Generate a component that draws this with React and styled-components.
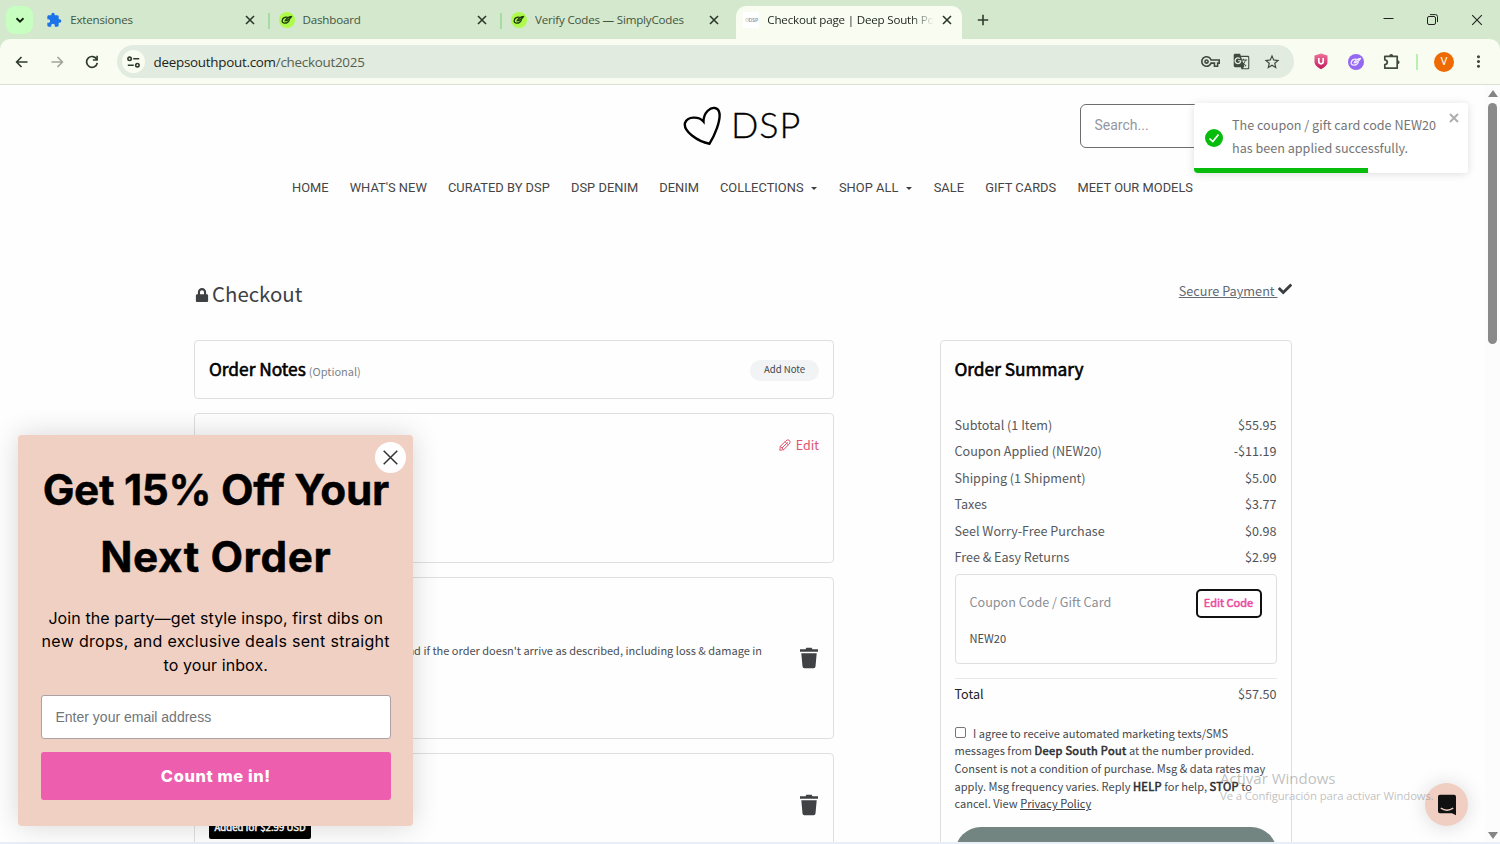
import React from 'react';
import styled, { createGlobalStyle, css } from 'styled-components';
import {
  MdExtension,
  MdGTranslate,
  MdMoreVert,
  MdOutlineVpnKey,
  MdStarOutline,
} from 'react-icons/md';
import { FaLock, FaCheck } from 'react-icons/fa';

const bodyFont = `'Noto Sans CJK SC', 'Open Sans', sans-serif`;
const chromeFont = `'Open Sans', 'Noto Sans', sans-serif`;

const GlobalStyle = createGlobalStyle`
  * {
    box-sizing: border-box;
  }
  body {
    margin: 0;
    overflow: hidden;
    background: #fff;
    font-family: ${bodyFont};
  }
  svg {
    display: block;
    flex: none;
  }
`;

const Window = styled.div`
  position: relative;
  display: flex;
  flex-direction: column;
  width: 1500px;
  height: 844px;
  overflow: hidden;
  background: #d3e8cd;
`;

/* Browser chrome */

const TabStrip = styled.div`
  display: flex;
  height: 39px;
  padding-left: 6px;
  font-family: ${chromeFont};
`;
const TabSearch = styled.div`
  display: flex;
  align-items: center;
  justify-content: center;
  width: 27px;
  height: 28px;
  margin: 6px 6.2px 0 0;
  border-radius: 9px;
  background: #c6ffc0;
`;
const TabSlot = styled.div`
  display: flex;
  align-items: center;
  width: 232.4px;
  padding-top: 6px;
`;
const Tab = styled.div`
  display: flex;
  align-items: center;
  width: 226px;
  height: 33px;
  padding: 0 10.500px 6px 7px;
  ${({ active }) =>
    active &&
    css`
      border-radius: 10px 10px 0 0;
      background: #f8fcf1;
    `}
`;
const TabTitle = styled.div`
  flex: 1;
  margin: 0 8px;
  overflow: hidden;
  white-space: nowrap;
  font-size: 11.6px;
  letter-spacing: -0.2px;
  line-height: 18px;
  color: ${({ active }) => (active ? '#1d241c' : '#43553f')};
  ${({ active }) =>
    active &&
    css`
      mask-image: linear-gradient(90deg, #000 86%, transparent 100%);
    `}
`;
const TabDivider = styled.div`
  width: 2px;
  height: 16px;
  margin: 0 0 4px 2.5px;
  background: #a5dca0;
`;
const Favicon = styled.div`
  display: flex;
  align-items: center;
  justify-content: center;
  width: 16px;
  height: 16px;
  background: ${({ bg }) => bg || 'transparent'};
  border-radius: ${({ round }) => (round ? '50%' : '0')};
  font: 700 5px/16px Lato, sans-serif;
  color: #96969a;
`;
const WindowButtons = styled.div`
  display: flex;
  align-items: center;
  margin-left: auto;
  gap: 33px;
  padding: 0 17px 0 0;
`;
const NewTab = styled.div`
  padding: 14px 0 0 8px;
`;

const Toolbar = styled.div`
  display: flex;
  align-items: center;
  height: 46px;
  padding: 0 12px 0 14px;
  border-bottom: 1px solid #d9e0d6;
  border-radius: 10px 10px 0 0;
  background: #f8fcf1;
`;
const NavButtons = styled.div`
  display: flex;
  gap: 19px;
  width: 103px;
`;
const Omnibox = styled.div`
  display: flex;
  align-items: center;
  width: 1177px;
  height: 33px;
  padding: 0 13.500px 0 5px;
  border-radius: 17px;
  background: #e2ebdf;
  color: #3f4b3f;
`;
const SiteInfo = styled.div`
  display: flex;
  align-items: center;
  justify-content: center;
  width: 23px;
  height: 23px;
  border-radius: 50%;
  background: #f8fcf1;
`;
const Url = styled.div`
  flex: 1;
  margin-left: 8.5px;
  font: 13.4px/20px ${chromeFont};
  letter-spacing: -0.26px;
  color: #1d241c;
  span {
    color: #55614f;
  }
`;
const OmniboxActions = styled.div`
  display: flex;
  align-items: center;
  gap: 13px;
`;
const Extensions = styled.div`
  display: flex;
  align-items: center;
  flex: 1;
  padding-left: 18.5px;
  color: #3f4b3f;
`;
const ExtensionSlot = styled.div`
  width: ${({ w }) => w}px;
`;
const ToolbarDivider = styled.div`
  width: 2px;
  height: 16px;
  margin-right: 16px;
  background: #b9efb2;
`;
const Avatar = styled.div`
  width: 20px;
  height: 20px;
  margin-right: 15px;
  border-radius: 50%;
  background: #ee6a02;
  color: #fff;
  font: 11px/20px Roboto, sans-serif;
  text-align: center;
`;

/* Store page */

const Viewport = styled.div`
  display: flex;
  height: 757px;
  overflow: hidden;
  background: #fefefe;
`;
const Page = styled.main`
  width: 1485px;
`;
const Scrollbar = styled.div`
  display: flex;
  flex-direction: column;
  align-items: center;
  width: 15px;
  padding: 5px 0 2px;
  background: #fcfcfc;
`;
const ScrollThumb = styled.div`
  width: 9px;
  height: 241px;
  margin: 4px 0 auto;
  border-radius: 5px;
  background: #8a8a8a;
`;
const TaskbarEdge = styled.div`
  height: 2px;
  background: #e9effa;
`;

const Header = styled.header`
  display: grid;
  grid-template-columns: 1fr 120px 1fr;
  height: 85px;
  padding-top: 19px;
`;
const Logo = styled.div`
  grid-column: 2;
  display: flex;
  align-items: center;
  height: 44px;
  font: 300 36px/41px Lato, sans-serif;
  letter-spacing: 1px;
  color: #000;
  -webkit-text-stroke: 0.3px #000;
  svg {
    margin: 0 9px 0 0.5px;
  }
`;
const LogoText = styled.span`
  height: 44px;
`;
const SearchBox = styled.div`
  width: 210px;
  height: 44px;
  margin-left: 277px;
  padding: 0 14px;
  border: 1px solid #6d6d6d;
  border-radius: 6px;
  background: #fff;
  font: 14px/41px Roboto, sans-serif;
  color: #9297a3;
`;
const StoreNav = styled.nav`
  display: grid;
  grid-template-columns: 57.7px 98.3px 123px 88.2px 60.8px 119px 94.7px 51.5px 92.3px auto;
  height: 36px;
  padding-left: 292px;
  font: 12.85px/36px Roboto, sans-serif;
  letter-spacing: 0.03px;
  color: #454545;
  white-space: nowrap;
`;
const NavItem = styled.div`
  display: flex;
  align-items: center;
  gap: 7.5px;
`;
const Caret = styled.span`
  margin-top: 1px;
  border: 3.5px solid transparent;
  border-top-color: #3d3d3d;
  border-bottom: 0;
`;

const TitleRow = styled.div`
  display: flex;
  justify-content: space-between;
  height: 64px;
  margin: 70px 193.5px 0 195px;
  color: #3e4144;
`;
const PageTitle = styled.h1`
  display: flex;
  align-items: center;
  gap: 3px;
  height: 35px;
  margin: 0;
  font-size: 20.4px;
  font-weight: 400;
  line-height: 35px;
  svg {
    margin-top: 3px;
  }
`;
const SecureLink = styled.div`
  display: flex;
  height: 32px;
  font-size: 12.7px;
  line-height: 29px;
  color: #626b73;
  white-space: pre;
  span {
    text-decoration: underline;
  }
  svg {
    margin-top: 6px;
    color: #3a3d40;
  }
`;
const Columns = styled.div`
  display: grid;
  grid-template-columns: 640px 351.5px;
  justify-content: space-between;
  margin: 0 193.5px 0 194px;
`;
const CardStack = styled.div`
  display: flex;
  flex-direction: column;
  gap: 14px;
`;
const Card = styled.section`
  display: flex;
  justify-content: ${({ spread }) => (spread ? 'space-between' : 'flex-end')};
  height: ${({ h }) => h}px;
  padding: 0 14px;
  border: 1px solid #dedfe1;
  border-radius: 4px;
`;
const CardTitle = styled.h2`
  margin: 0;
  font-size: 17.3px;
  font-weight: 400;
  line-height: 56px;
  color: #000;
  -webkit-text-stroke: 0.6px #000;
  small {
    margin-left: 3px;
    font-size: 11px;
    color: #7b838a;
    -webkit-text-stroke: 0;
  }
`;
const AddNote = styled.div`
  width: 69px;
  height: 21px;
  margin-top: 19px;
  border-radius: 11px;
  background: #f2f3f5;
  font-size: 9.6px;
  line-height: 18px;
  text-align: center;
  color: #45494d;
`;
const EditLink = styled.div`
  display: flex;
  gap: 5px;
  margin-top: 21px;
  font-size: 12.5px;
  line-height: 20px;
  color: #e2526f;
  svg {
    margin-top: 4px;
  }
`;
const ItemText = styled.div`
  margin: 63px 37px 0 0;
  font-size: 11px;
  line-height: 18px;
  color: #4a4e52;
  white-space: nowrap;
`;
const TrashSlot = styled.div`
  margin-top: ${({ top }) => top}px;
`;
const PriceBadge = styled.div`
  width: 102px;
  height: 22px;
  margin-top: 63px;
  border-radius: 2px;
  background: #000;
  color: #fff;
  font-size: 9.6px;
  line-height: 20px;
  text-align: center;
  -webkit-text-stroke: 0.5px #fff;
`;

const Summary = styled.section`
  display: flex;
  flex-direction: column;
  height: 620px;
  padding: 0 14px 0 13.500px;
  border: 1px solid #dedfe1;
  border-radius: 4px;
`;
const SummaryRow = styled.div`
  display: flex;
  justify-content: space-between;
  font-size: 12.6px;
  line-height: 26.4px;
  color: ${({ total }) => (total ? '#222' : '#56595c')};
  span + span {
    color: #505356;
  }
`;
const SummaryLines = styled.div`
  margin-top: 15px;
`;
const CouponBox = styled.div`
  display: grid;
  grid-template-columns: 1fr auto;
  grid-template-rows: 37px 22px;
  height: 90px;
  margin: 4px 0 13.500px;
  padding: 14px 14px 0;
  border: 1px solid #dedfe1;
  border-radius: 4px;
`;
const CouponLabel = styled.div`
  font-size: 12.6px;
  line-height: 26px;
  color: #8b8f94;
`;
const CouponCode = styled.div`
  font-size: 11.1px;
  line-height: 25px;
  color: #45494d;
`;
const EditCode = styled.div`
  width: 66px;
  height: 29px;
  border: 2px solid #111;
  border-radius: 5px;
  background: #fff;
  font-size: 11px;
  line-height: 22px;
  text-align: center;
  color: #e94b9c;
  -webkit-text-stroke: 0.5px #e94b9c;
`;
const TotalBlock = styled.div`
  padding-top: 2.500px;
  border-top: 1px solid #e6e7e9;
`;
const Agreement = styled.p`
  margin: 17px -4px 14px 0;
  font-size: 11.07px;
  line-height: 17.6px;
  color: #45494d;
  white-space: nowrap;
  b {
    font-weight: 400;
    letter-spacing: 0.34px;
    color: #2c2f33;
    -webkit-text-stroke: 0.55px #2c2f33;
  }
  u {
    color: #3c4043;
  }
`;
const CheckBox = styled.span`
  display: inline-block;
  width: 11px;
  height: 11px;
  margin-right: 7.500px;
  border: 1px solid #767676;
  border-radius: 2px;
  background: #fff;
`;
const PlaceOrder = styled.div`
  height: 52px;
  border-radius: 26px;
  background: #738580;
`;

/* Overlays */

const Toast = styled.div`
  position: absolute;
  top: 103px;
  left: 1194px;
  display: flex;
  width: 274px;
  height: 70px;
  padding: 11px 9px 0 11px;
  border-radius: 4px;
  overflow: hidden;
  background: #fff;
`;
const ToastShadow = styled.div`
  position: absolute;
  top: 103px;
  left: 1194px;
  width: 274px;
  height: 70px;
  border-radius: 4px;
  box-shadow: 0 1px 9px rgba(0, 0, 0, 0.13);
`;
const ToastText = styled.div`
  flex: 1;
  margin-left: 9px;
  font-size: 12.6px;
  line-height: 22.6px;
  color: #757575;
  white-space: nowrap;
`;
const ToastIcon = styled.div`
  margin-top: 15px;
`;
const ToastClose = styled.div`
  margin-top: -1.500px;
`;
const ToastProgress = styled.div`
  position: absolute;
  bottom: 0;
  left: 0;
  width: 174px;
  height: 5px;
  background: #07bc0c;
`;

const Popup = styled.div`
  position: absolute;
  top: 435px;
  left: 18px;
  width: 395px;
  height: 391px;
  padding: 21px 22px 0 22.500px;
  border-radius: 4px;
  background: #f0d0c3;
  box-shadow: 0 0 28px rgba(0, 0, 0, 0.16);
  font-family: Inter, sans-serif;
  text-align: center;
  white-space: nowrap;
  color: #000;
`;
const PopupTitle = styled.h2`
  margin: 0 -10px;
  font-size: 42.3px;
  font-weight: 700;
  line-height: 67.4px;
  -webkit-text-stroke: 0.4px #000;
`;
const PopupText = styled.p`
  margin: 16px -10px 17.500px;
  font-size: 16px;
  line-height: 23.4px;
`;
const TextLine = styled.div`
  letter-spacing: ${({ spacing }) => spacing}px;
`;
const EmailField = styled.div`
  height: 44px;
  padding-left: 14px;
  border: 1px solid #a9a3a3;
  border-radius: 3px;
  background: #fff;
  font: 14px/42px 'Liberation Sans', sans-serif;
  text-align: left;
  color: #70757a;
`;
const JoinButton = styled.div`
  height: 48px;
  margin-top: 13px;
  border-radius: 3px;
  background: #ed5eaf;
  color: #fff;
  font-size: 16.4px;
  font-weight: 800;
  line-height: 48px;
  letter-spacing: 0.6px;
`;
const PopupClose = styled.div`
  position: absolute;
  top: 7px;
  right: 7px;
  display: flex;
  align-items: center;
  justify-content: center;
  width: 31px;
  height: 31px;
  border-radius: 50%;
  background: #fff;
`;

const Watermark = styled.div`
  position: absolute;
  top: 769px;
  left: 1220px;
  font-family: ${chromeFont};
  color: rgba(130, 130, 130, 0.5);
  white-space: nowrap;
`;
const WatermarkTitle = styled.div`
  font-size: 15px;
  line-height: 18px;
`;
const WatermarkText = styled.div`
  font-size: 11.3px;
  line-height: 18px;
  letter-spacing: -0.1px;
`;
const ChatButton = styled.div`
  position: absolute;
  top: 783px;
  left: 1425px;
  display: flex;
  align-items: center;
  justify-content: center;
  width: 43px;
  height: 43px;
  border-radius: 50%;
  background: #f0cfc2;
  box-shadow: 0 1px 20px rgba(0, 0, 0, 0.15);
`;

const Cross = ({ size, stroke, color }) => (
  <svg width={size} height={size} viewBox="0 0 10 10">
    <path
      d="M1 1 9 9M9 1 1 9"
      stroke={color}
      strokeWidth={(stroke * 10) / size}
      fill="none"
    />
  </svg>
);

const LeafMark = ({ color }) => (
  <svg width="12" height="12" viewBox="0 0 12 12">
    <g fill="none" stroke={color} strokeWidth="1.3" strokeLinecap="round">
      <path d="M6 3.2C3.6 2.8 1.5 4.3 1.2 6.6c-.2 1.7 1 2.7 2.7 2.6 2.3-.1 3.6-1.3 4.3-2.8" />
      <path d="M4.2 6.7C5.4 4.1 7.8 3 11 2.5c-1.2.6-1 1.3-2.1 1.8.2.6-.9 1.1-1.7 1.3-.5.8-1.6 1.3-3 1.1z" />
    </g>
  </svg>
);

const TrashIcon = () => (
  <svg width="20" height="22" viewBox="0 0 20 22">
    <path
      fill="#3f4144"
      d="M1 2.3h5.5L7.4.8h5.2l.9 1.500H19v2.400H1zM2.300 6.200h15.400l-1.200 13.300q-.2 1.800-1.800 1.800H5.300q-1.600 0-1.800-1.800z"
    />
  </svg>
);

const PuzzleIcon = () => (
  <svg width="19" height="19" viewBox="0 0 19 19">
    <path
      d="M2.800 4.300H15.200V16.200H2.800V12.600Q5.300 12.200 5.300 10.200T2.800 7.800z"
      fill="none"
      stroke="#3f4b3f"
      strokeWidth="1.700"
      strokeLinejoin="round"
    />
    <path d="M7.200 4.200q0-2.300 2-2.300t2 2.300zM15.300 8.200q2.300 0 2.300 2t-2.300 2z" fill="#3f4b3f" />
  </svg>
);

const Arrow = ({ flip, color }) => (
  <svg width="16" height="16" viewBox="0 0 16 16">
    <path
      d={flip ? 'M2.5 8H13M8.5 3 13.4 8 8.5 13' : 'M13.5 8H3M7.5 3 2.6 8 7.5 13'}
      stroke={color}
      strokeWidth="1.6"
      fill="none"
    />
  </svg>
);

const tabs = [
  { title: 'Extensiones', icon: 'extension' },
  { title: 'Dashboard', icon: 'leaf' },
  { title: 'Verify Codes — SimplyCodes', icon: 'leaf' },
  { title: 'Checkout page | Deep South Pout', icon: 'store', active: true },
];

const navItems = [
  ['HOME'],
  ["WHAT'S NEW"],
  ['CURATED BY DSP'],
  ['DSP DENIM'],
  ['DENIM'],
  ['COLLECTIONS', true],
  ['SHOP ALL', true],
  ['SALE'],
  ['GIFT CARDS'],
  ['MEET OUR MODELS'],
];

const summary = [
  ['Subtotal (1 Item)', '$55.95'],
  ['Coupon Applied (NEW20)', '-$11.19'],
  ['Shipping (1 Shipment)', '$5.00'],
  ['Taxes', '$3.77'],
  ['Seel Worry-Free Purchase', '$0.98'],
  ['Free & Easy Returns', '$2.99'],
];

const TabIcon = ({ icon }) => {
  if (icon === 'extension') {
    return (
      <Favicon>
        <MdExtension size={16} color="#1a73e8" />
      </Favicon>
    );
  }
  if (icon === 'leaf') {
    return (
      <Favicon bg="#aefb4b" round>
        <LeafMark color="#1d3a10" />
      </Favicon>
    );
  }
  return <Favicon bg="#fff">♡DSP</Favicon>;
};

const BrowserChrome = () => (
  <>
    <TabStrip>
      <TabSearch>
        <svg width="10" height="10" viewBox="0 0 10 10">
          <path d="M1.5 3.3 5 6.7 8.5 3.3" stroke="#14210f" strokeWidth="1.9" fill="none" />
        </svg>
      </TabSearch>
      {tabs.map(({ title, icon, active }, index) => (
        <TabSlot key={title}>
          <Tab active={active}>
            <TabIcon icon={icon} />
            <TabTitle active={active}>{title}</TabTitle>
            <Cross size={10} stroke={1.6} color="#2b3829" />
          </Tab>
          {index < 2 && <TabDivider />}
        </TabSlot>
      ))}
      <NewTab>
        <svg width="12" height="12" viewBox="0 0 12 12">
          <path d="M6 .8v10.4M.8 6h10.4" stroke="#2f3d2c" strokeWidth="1.6" />
        </svg>
      </NewTab>
      <WindowButtons>
        <svg width="11" height="11" viewBox="0 0 11 11">
          <path d="M.5 4.5h10" stroke="#222" />
        </svg>
        <svg width="11" height="11" viewBox="0 0 11 11" fill="none" stroke="#222">
          <rect x=".5" y="2.5" width="8" height="8" rx="1.5" />
          <path d="M3 .6h5.5q2 0 2 2v5.5" />
        </svg>
        <Cross size={12} stroke={1.1} color="#222" />
      </WindowButtons>
    </TabStrip>
    <Toolbar>
      <NavButtons>
        <Arrow color="#2f3a2e" />
        <Arrow flip color="#9da59b" />
        <svg width="16" height="16" viewBox="0 0 16 16" fill="none">
          <path d="M12.8 5.5A5.4 5.4 0 1 0 13.3 8.8" stroke="#2f3a2e" strokeWidth="1.7" />
          <path d="M13.9 1.8v5H8.9V5.2h3.4V1.8z" fill="#2f3a2e" />
        </svg>
      </NavButtons>
      <Omnibox>
        <SiteInfo>
          <svg width="13" height="12" viewBox="0 0 13 12" fill="none" stroke="#2f3a2e" strokeWidth="1.6">
            <circle cx="2.6" cy="2.8" r="1.7" />
            <path d="M6.2 2.8h6M.8 9.2h6" />
            <circle cx="10.4" cy="9.2" r="1.7" />
          </svg>
        </SiteInfo>
        <Url>
          deepsouthpout.com<span>/checkout2025</span>
        </Url>
        <OmniboxActions>
          <MdOutlineVpnKey size={19} />
          <MdGTranslate size={17} />
          <MdStarOutline size={18} />
        </OmniboxActions>
      </Omnibox>
      <Extensions>
        <ExtensionSlot w={35.5}>
          <svg width="16" height="17" viewBox="0 0 16 17">
            <defs>
              <linearGradient id="shield" x2="0" y2="1">
                <stop offset="0" stopColor="#f0739b" />
                <stop offset="1" stopColor="#c2185b" />
              </linearGradient>
            </defs>
            <path d="M8 .5 14.5 2.5V9q0 4-6.5 7.3Q1.5 13 1.5 9V2.500z" fill="url(#shield)" />
            <path d="M5.8 5v3.6q0 2.2 2.2 2.2t2.2-2.2V5" fill="none" stroke="#fff" strokeWidth="1.7" />
          </svg>
        </ExtensionSlot>
        <ExtensionSlot w={34}>
          <Favicon bg="#9568f2" round>
            <LeafMark color="#f2ecff" />
          </Favicon>
        </ExtensionSlot>
        <ExtensionSlot w={34}>
          <PuzzleIcon />
        </ExtensionSlot>
        <ToolbarDivider />
        <Avatar>V</Avatar>
        <MdMoreVert size={19} />
      </Extensions>
    </Toolbar>
  </>
);

const OrderSummary = () => (
  <Summary>
    <CardTitle>Order Summary</CardTitle>
    <SummaryLines>
      {summary.map(([label, amount]) => (
        <SummaryRow key={label}>
          <span>{label}</span>
          <span>{amount}</span>
        </SummaryRow>
      ))}
    </SummaryLines>
    <CouponBox>
      <CouponLabel>Coupon Code / Gift Card</CouponLabel>
      <EditCode>Edit Code</EditCode>
      <CouponCode>NEW20</CouponCode>
    </CouponBox>
    <TotalBlock>
      <SummaryRow total>
        <span>Total</span>
        <span>$57.50</span>
      </SummaryRow>
    </TotalBlock>
    <Agreement>
      <CheckBox />I agree to receive automated marketing texts/SMS
      <br />
      messages from <b>Deep South Pout</b> at the number provided.
      <br />
      Consent is not a condition of purchase. Msg &amp; data rates may
      <br />
      apply. Msg frequency varies. Reply <b>HELP</b> for help, <b>STOP</b> to
      <br />
      cancel. View <u>Privacy Policy</u>
    </Agreement>
    <PlaceOrder />
  </Summary>
);

const SignupPopup = () => (
  <Popup>
    <PopupClose>
      <Cross size={17} stroke={1.5} color="#333" />
    </PopupClose>
    <PopupTitle>
      <TextLine spacing={-0.3}>Get 15% Off Your</TextLine>
      <TextLine spacing={0.6}>Next Order</TextLine>
    </PopupTitle>
    <PopupText>
      <TextLine spacing={0.1}>Join the party—get style inspo, first dibs on</TextLine>
      <TextLine spacing={0.3}>new drops, and exclusive deals sent straight</TextLine>
      <TextLine spacing={0.1}>to your inbox.</TextLine>
    </PopupText>
    <EmailField>Enter your email address</EmailField>
    <JoinButton>Count me in!</JoinButton>
  </Popup>
);

const App = () => (
  <Window>
    <GlobalStyle />
    <BrowserChrome />
    <Viewport>
      <Page>
        <Header>
          <Logo>
            <svg width="39" height="40" viewBox="0 0 39 40">
              <path
                d="M20.5 15.5C16 10.3 4.5 10 2 17c-2 8 12.5 18.5 24.5 20.7C32 29 37.5 15 36.5 7.5 35.5.5 29 .5 24.5 5c-3 3.2-4 6.5-4 10.5z"
                fill="none"
                stroke="#000"
                strokeWidth="2.4"
              />
            </svg>
            <LogoText>DSP</LogoText>
          </Logo>
          <SearchBox>Search...</SearchBox>
        </Header>
        <StoreNav>
          {navItems.map(([label, hasMenu]) => (
            <NavItem key={label}>
              {label}
              {hasMenu && <Caret />}
            </NavItem>
          ))}
        </StoreNav>
        <TitleRow>
          <PageTitle>
            <FaLock size={14} />
            Checkout
          </PageTitle>
          <SecureLink>
            <span>Secure Payment </span>
            <FaCheck size={14} />
          </SecureLink>
        </TitleRow>
        <Columns>
          <CardStack>
            <Card h={59} spread>
              <CardTitle>
                Order Notes<small>(Optional)</small>
              </CardTitle>
              <AddNote>Add Note</AddNote>
            </Card>
            <Card h={149.5}>
              <EditLink>
                <svg width="12" height="12" viewBox="0 0 12 12" fill="none" stroke="#e2526f">
                  <path d="M.8 11.2 1.3 7.4 7 1.7q2-1.700 3.500-.2t-.2 3.500L4.600 10.700zM1.300 7.400 4.600 10.700M3 9 8.800 3.200M6 2.700 9.300 6" />
                </svg>
                Edit
              </EditLink>
            </Card>
            <Card h={162}>
              <ItemText>
                Get a full refund if the order doesn't arrive as described, including loss &amp; damage in
              </ItemText>
              <TrashSlot top={69}>
                <TrashIcon />
              </TrashSlot>
            </Card>
            <Card h={160} spread>
              <PriceBadge>Added for $2.99 USD</PriceBadge>
              <TrashSlot top={40.5}>
                <TrashIcon />
              </TrashSlot>
            </Card>
          </CardStack>
          <OrderSummary />
        </Columns>
      </Page>
      <Scrollbar>
        <svg width="10" height="9" viewBox="0 0 10 9">
          <path d="M5 0 10 7H0z" fill="#858585" />
        </svg>
        <ScrollThumb />
        <svg width="10" height="9" viewBox="0 0 10 9">
          <path d="M5 8 10 1H0z" fill="#858585" />
        </svg>
      </Scrollbar>
    </Viewport>
    <TaskbarEdge />
    <ToastShadow />
    <Toast>
      <ToastIcon>
        <svg width="18" height="18" viewBox="0 0 18 18">
          <circle cx="9" cy="9" r="9" fill="#07bc0c" />
          <path d="M4.5 9.5 7.8 12.6 13.5 5.5" fill="none" stroke="#fff" strokeWidth="1.7" />
        </svg>
      </ToastIcon>
      <ToastText>
        The coupon / gift card code NEW20
        <br />
        has been applied successfully.
      </ToastText>
      <ToastClose>
        <Cross size={10} stroke={1.9} color="#adadad" />
      </ToastClose>
      <ToastProgress />
    </Toast>
    <SignupPopup />
    <ChatButton>
      <svg width="20" height="22" viewBox="0 0 20 22">
        <path d="M3 .8h14q2 0 2 2v18.400l-4-2H3q-2 0-2-2V2.800q0-2 2-2z" fill="#111" />
        <path d="M3.800 14.200q6.200 4 12.400 0" fill="none" stroke="#f0cfc2" strokeWidth="1.400" />
      </svg>
    </ChatButton>
    <Watermark>
      <WatermarkTitle>Activar Windows</WatermarkTitle>
      <WatermarkText>Ve a Configuración para activar Windows.</WatermarkText>
    </Watermark>
  </Window>
);

export default App;
